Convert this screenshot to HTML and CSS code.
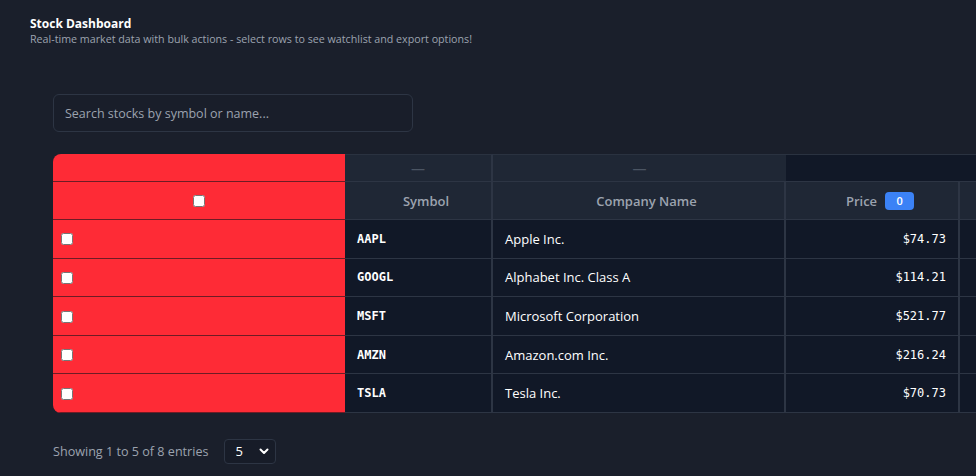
FILE: index.html
```html
<!DOCTYPE html>
<html lang="en">
<head>
<meta charset="utf-8">
<title>Stock Dashboard</title>
<link rel="stylesheet" href="styles.css">
</head>
<body>
<div class="page">
  <header class="head">
    <h1 class="title">Stock Dashboard</h1>
    <p class="subtitle">Real-time market data with bulk actions - select rows to see watchlist and export options!</p>
  </header>
  <main class="content">
    <div class="search">
      <input class="search-input" type="text" placeholder="Search stocks by symbol or name...">
    </div>
    <div class="table-wrap">
      <table class="grid">
        <colgroup>
          <col class="c-sel"><col class="c-sym"><col class="c-name"><col class="c-price"><col class="c-chg">
        </colgroup>
        <thead>
          <tr class="group-row">
            <th class="sel"></th>
            <th class="grp">—</th>
            <th class="grp">—</th>
            <th class="grp-empty" colspan="2"></th>
          </tr>
          <tr class="head-row">
            <th class="sel sel-head"><input type="checkbox" class="cb"></th>
            <th class="hd">Symbol</th>
            <th class="hd">Company Name</th>
            <th class="hd"><span class="hd-inner">Price <span class="badge">0</span></span></th>
            <th class="hd"></th>
          </tr>
        </thead>
        <tbody>
          <tr><td class="sel"><input type="checkbox" class="cb"></td><td class="sym">AAPL</td><td class="name">Apple Inc.</td><td class="price">$74.73</td><td class="chg"></td></tr>
          <tr><td class="sel"><input type="checkbox" class="cb"></td><td class="sym">GOOGL</td><td class="name">Alphabet Inc. Class A</td><td class="price">$114.21</td><td class="chg"></td></tr>
          <tr><td class="sel"><input type="checkbox" class="cb"></td><td class="sym">MSFT</td><td class="name">Microsoft Corporation</td><td class="price">$521.77</td><td class="chg"></td></tr>
          <tr><td class="sel"><input type="checkbox" class="cb"></td><td class="sym">AMZN</td><td class="name">Amazon.com Inc.</td><td class="price">$216.24</td><td class="chg"></td></tr>
          <tr><td class="sel"><input type="checkbox" class="cb"></td><td class="sym">TSLA</td><td class="name">Tesla Inc.</td><td class="price">$70.73</td><td class="chg"></td></tr>
        </tbody>
      </table>
    </div>
    <div class="footer">
      <span class="showing">Showing 1 to 5 of 8 entries</span>
      <div class="select-box">
        <select class="page-size">
          <option>5</option>
          <option>10</option>
          <option>20</option>
        </select>
        <svg class="chev" width="12" height="12" viewBox="0 0 12 12" aria-hidden="true"><path d="M2.5 4.5 L6 8 L9.5 4.5" fill="none" stroke="#ffffff" stroke-width="2" stroke-linecap="round" stroke-linejoin="round"/></svg>
      </div>
    </div>
  </main>
</div>
</body>
</html>
```

FILE: styles.css
```css
* { box-sizing: border-box; }

html, body {
  margin: 0;
  padding: 0;
  background: #1a1f2b;
  overflow: hidden;
}

body {
  font-family: "Open Sans", "Noto Sans", sans-serif;
  color: #f3f4f6;
}

.page {
  padding: 15px 0 0 30px;
}

.title {
  margin: 0;
  font-size: 12px;
  font-weight: 700;
  line-height: 17px;
  color: #ffffff;
}

.subtitle {
  margin: 0;
  font-size: 10.7px;
  line-height: 15px;
  color: #9ca3af;
}

.content {
  padding: 47px 0 0 23px;
}

.search-input {
  display: block;
  width: 360px;
  height: 38px;
  padding: 0 11px;
  background: #191e2a;
  border: 1px solid #2d3544;
  border-radius: 6px;
  font-family: "Open Sans", "Noto Sans", sans-serif;
  font-size: 12.5px;
  color: #e5e7eb;
  outline: none;
}

.search-input::placeholder { color: #9ca3af; }

.table-wrap {
  margin-top: 22px;
  border-radius: 8px 0 0 8px;
  overflow: hidden;
}

.grid {
  width: 1100px;
  table-layout: fixed;
  border-collapse: separate;
  border-spacing: 0;
  font-size: 13px;
}

.c-sel { width: 292px; }
.c-sym { width: 148px; }
.c-name { width: 293px; }
.c-price { width: 174px; }
.c-chg { width: 193px; }

.grid th, .grid td {
  padding: 0 12px;
  border-bottom: 1px solid #2d3544;
}

.group-row { height: 28px; }
.head-row { height: 38px; }
.grid tbody tr { height: 38.6px; }

.grp {
  background: #1f2735;
  color: #4b5563;
  font-weight: 400;
  font-size: 14px;
  text-align: center;
  border-top: 1px solid #2a3240;
  border-right: 2px solid #2d3544;
}

.grp + .grp { border-right: none; }

.grp-empty {
  background: #111827;
  border-top: 1px solid #2a3240;
}

.grid .sel,
.grid tbody td.sel {
  background: #fe2b36;
  border-bottom: 1px solid #6e1c25;
  text-align: left;
  padding: 0 8px;
}

.grid .sel-head { text-align: center; }

.cb {
  margin: 0;
  width: 12px;
  height: 12px;
  vertical-align: middle;
  position: relative;
  top: -1px;
}

.grid .hd {
  background: #1f2735;
  color: #9ca3af;
  font-weight: 600;
  text-align: center;
  padding: 0 8px 0 24px;
  border-right: 2px solid #2d3544;
}

.hd-inner {
  display: inline-flex;
  align-items: center;
  gap: 8px;
}

.badge {
  display: inline-flex;
  align-items: center;
  justify-content: center;
  height: 18px;
  min-width: 29px;
  padding: 0 10px;
  border-radius: 4px;
  background: #3b82f6;
  color: #ffffff;
  font-size: 11px;
  font-weight: 600;
}

.grid tbody td {
  background: #111827;
}

.grid .sym {
  font-family: "DejaVu Sans Mono", "Liberation Mono", monospace;
  font-size: 12px;
  font-weight: 700;
  color: #ffffff;
  border-right: 2px solid #2d3544;
}

.grid .name {
  color: #ffffff;
  padding-left: 12px;
  border-right: 2px solid #2d3544;
}

.grid .price {
  font-family: "DejaVu Sans Mono", "Liberation Mono", monospace;
  font-size: 12px;
  color: #ffffff;
  text-align: right;
  border-right: 2px solid #2d3544;
}

.footer {
  display: flex;
  align-items: center;
  gap: 15px;
  margin-top: 26px;
}

.showing {
  font-size: 12.6px;
  color: #9ca3af;
}

.select-box {
  position: relative;
  width: 52px;
  height: 25px;
}

.page-size {
  appearance: none;
  -webkit-appearance: none;
  width: 100%;
  height: 100%;
  padding: 0 0 0 11px;
  background: #171c28;
  border: 1px solid #2d3544;
  border-radius: 4px;
  color: #ffffff;
  font-family: "Open Sans", "Noto Sans", sans-serif;
  font-size: 13px;
  outline: none;
}

.chev {
  position: absolute;
  right: 6px;
  top: 6px;
  pointer-events: none;
}
```
